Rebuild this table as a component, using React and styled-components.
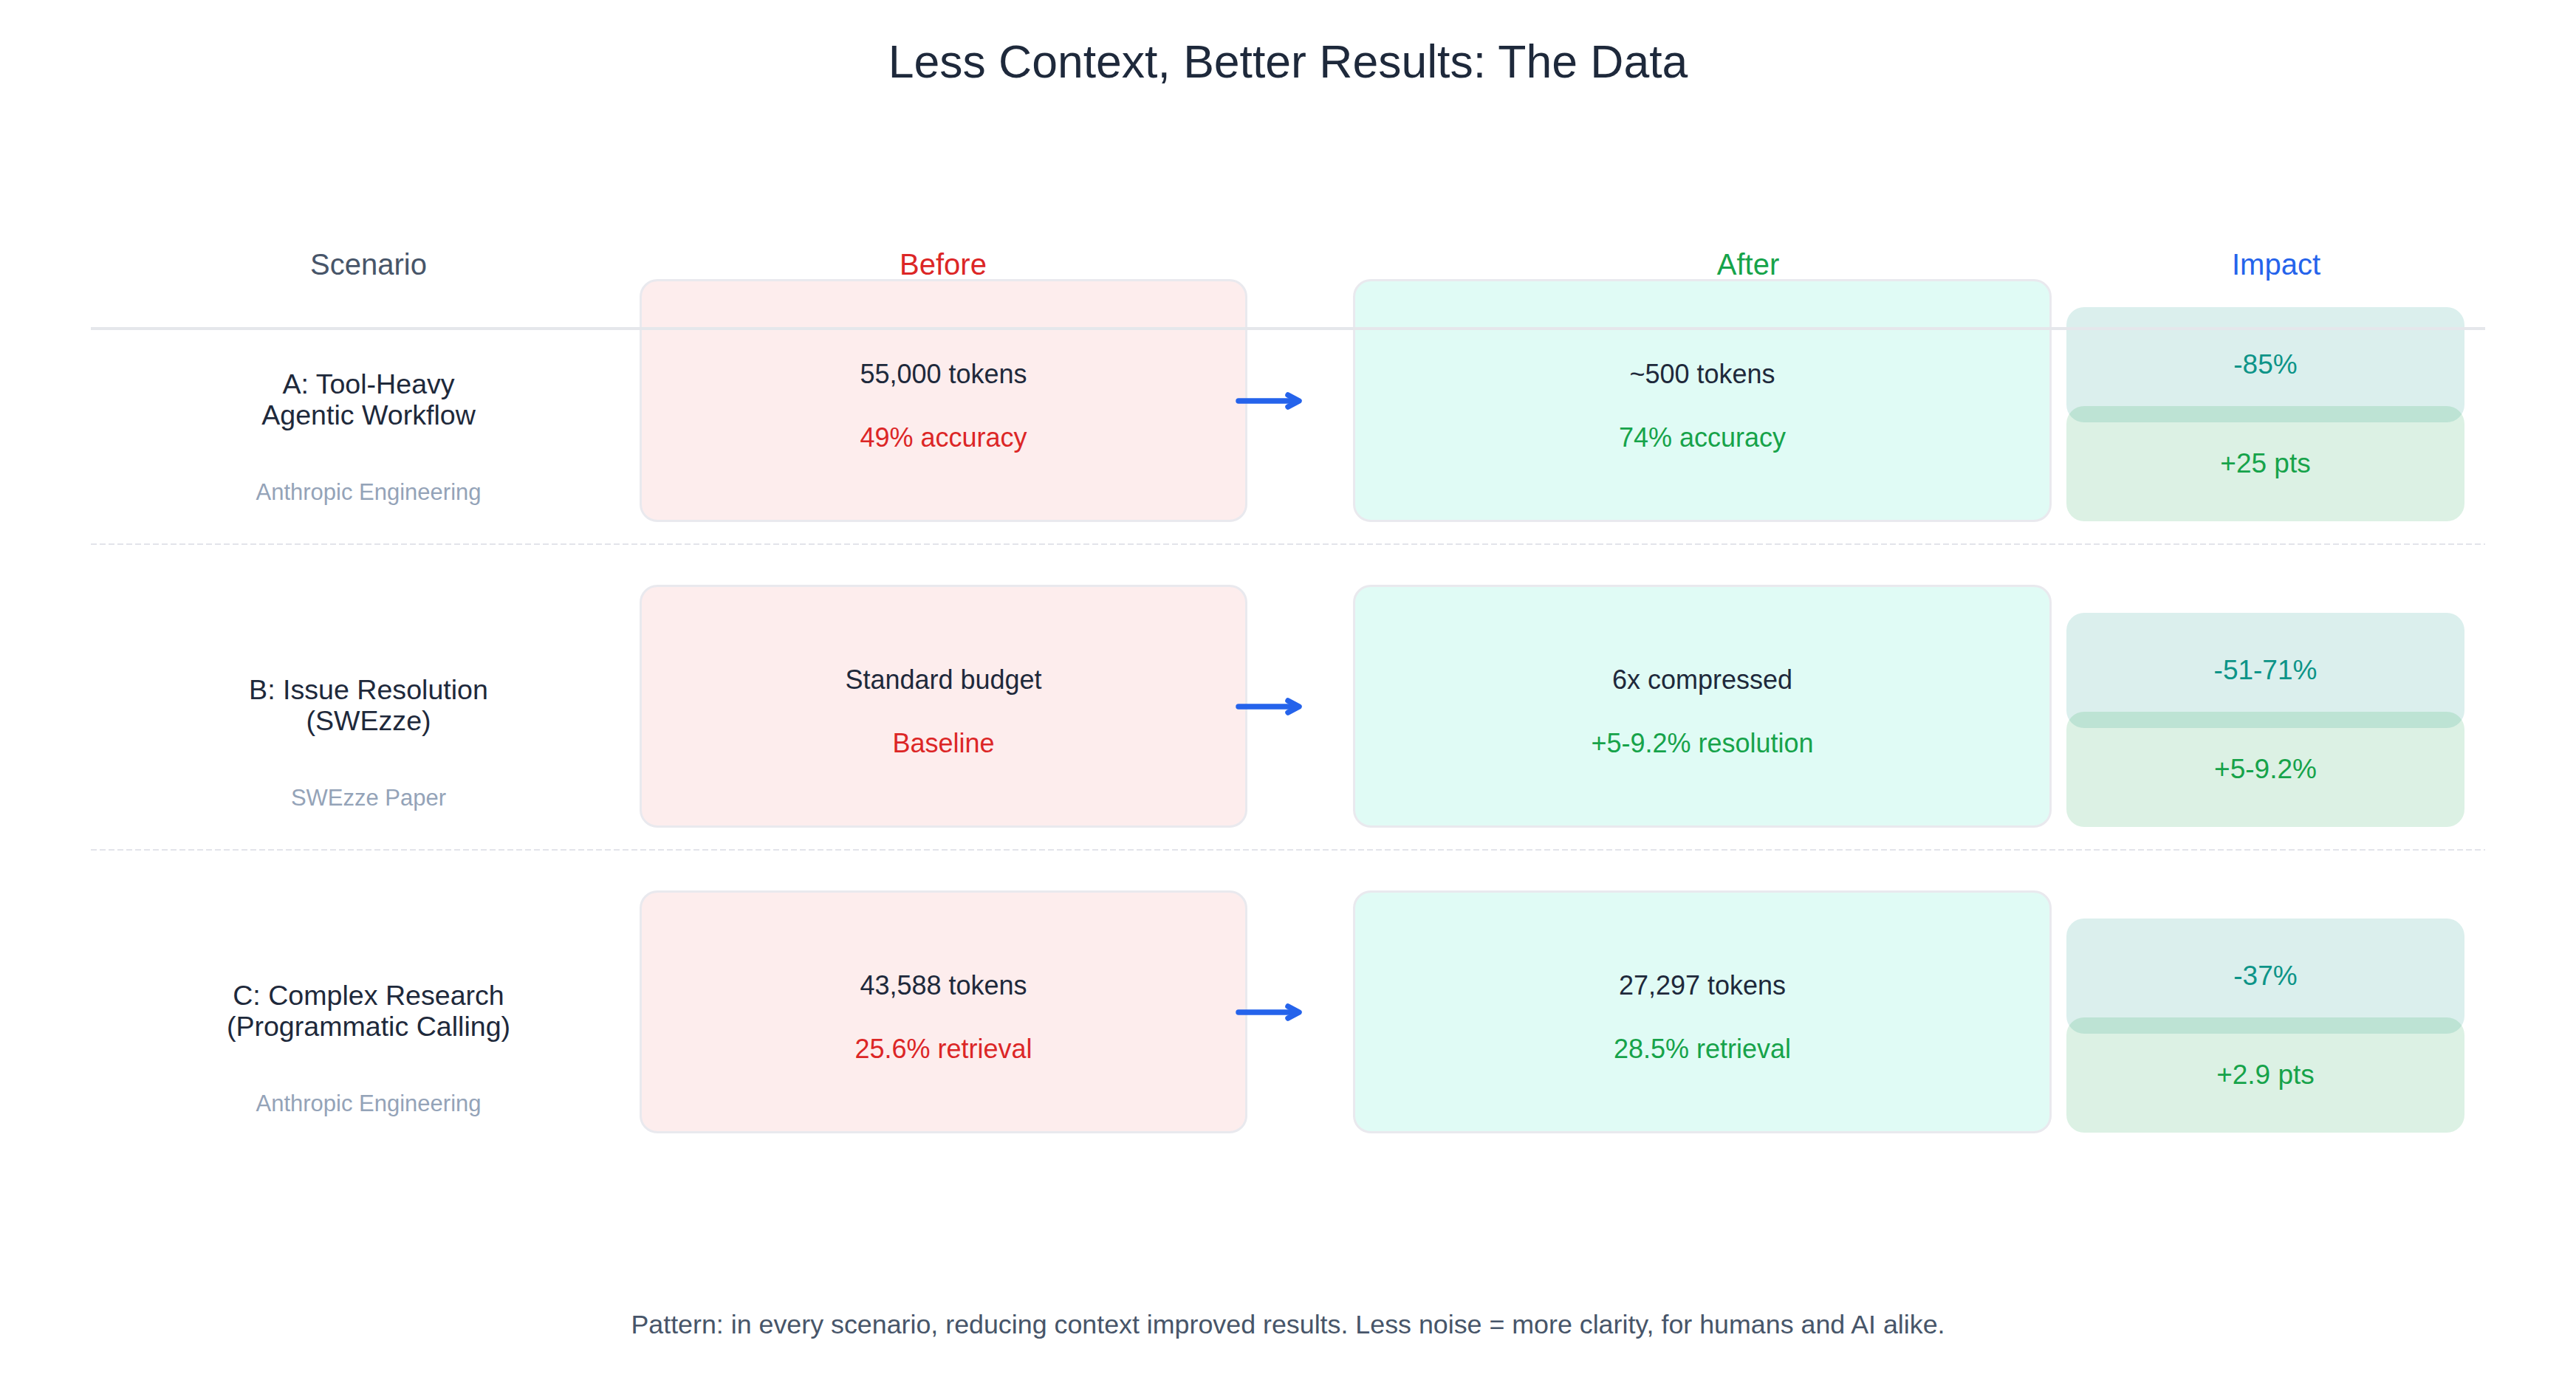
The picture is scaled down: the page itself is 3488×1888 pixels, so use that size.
import React from "react";
import styled, { createGlobalStyle } from "styled-components";

const GlobalStyle = createGlobalStyle`
  html, body {
    margin: 0;
    padding: 0;
    background: #ffffff;
  }
  body {
    font-family: "Liberation Sans", Arial, sans-serif;
    color: #1e293b;
  }
`;

const Page = styled.div`
  width: 3488px;
  height: 1888px;
  display: flex;
  flex-direction: column;
  align-items: center;
  box-sizing: border-box;
  padding-top: 52px;
`;

const Title = styled.h1`
  margin: 0;
  font-size: 62.5px;
  line-height: 62px;
  font-weight: 400;
  color: #1e293b;
`;

const Table = styled.div`
  position: relative;
  width: 3242px;
  margin-top: 224px;
`;

const HeaderRow = styled.div`
  display: grid;
  grid-template-columns: 752px 804px 238px 900px 530px;
  height: 40px;
`;

const HeaderCell = styled.div`
  grid-column: ${(p) => p.$col};
  text-align: center;
  font-size: 40px;
  line-height: 40px;
  color: ${(p) => p.$color};
`;

const HeadRule = styled.div`
  position: absolute;
  left: 0;
  right: 0;
  top: 105px;
  height: 4px;
  background: #e5e7eb;
  z-index: 2;
`;

const Row = styled.div`
  display: grid;
  grid-template-columns: 743px 823px 143px 946px 559px;
  height: 329px;
`;

const ScenarioCell = styled.div`
  display: flex;
  flex-direction: column;
  align-items: center;
  padding: 121px 0 0 9px;
`;

const ScenarioName = styled.div`
  font-size: 37.6px;
  line-height: 42px;
  text-align: center;
  color: #1e293b;
`;

const Source = styled.div`
  margin-top: 68px;
  font-size: 31px;
  line-height: 31px;
  color: #94a3b8;
`;

const ValueBox = styled.div`
  box-sizing: border-box;
  height: 329px;
  border: 3px solid #e9e9ee;
  border-radius: 24px;
  background: ${(p) => (p.$tone === "after" ? "#e0fbf5" : "#fdeded")};
  display: flex;
  flex-direction: column;
  align-items: center;
  justify-content: center;
  gap: 50px;
  padding-top: 15px;
`;

const Value = styled.div`
  font-size: 36px;
  line-height: 36px;
  color: ${(p) => p.$color || "#1e293b"};
`;

const ArrowCell = styled.div`
  display: flex;
  align-items: center;
  margin-left: -20px;
  position: relative;
  z-index: 1;
`;

const ImpactCell = styled.div`
  display: flex;
  flex-direction: column;
  padding-top: 38px;
  margin-left: 20px;
`;

const ImpactBox = styled.div`
  height: 156px;
  border-radius: 24px;
  display: flex;
  align-items: center;
  justify-content: center;
  font-size: 37px;
  background: ${(p) =>
    p.$kind === "cut" ? "rgba(13, 148, 136, 0.15)" : "rgba(22, 163, 74, 0.15)"};
  color: ${(p) => (p.$kind === "cut" ? "#0d9488" : "#16a34a")};
  & + & {
    margin-top: -22px;
  }
`;

const Divider = styled.div`
  height: 2px;
  margin: 29px 0 54px;
  background: repeating-linear-gradient(
    to right,
    #e2e4ea 0 8px,
    transparent 8px 12px
  );
`;

const Footer = styled.p`
  margin: 242px 0 0;
  font-size: 35.8px;
  line-height: 35px;
  color: #475569;
`;

function Arrow() {
  return (
    <svg width="100" height="40" viewBox="0 0 100 40">
      <g
        stroke="#2563eb"
        strokeWidth="7.5"
        strokeLinecap="round"
        strokeLinejoin="round"
        fill="none"
      >
        <line x1="8" y1="20" x2="86" y2="20" />
        <polyline points="75,12 90,20 75,28" />
      </g>
    </svg>
  );
}

const rows = [
  {
    name: ["A: Tool-Heavy", "Agentic Workflow"],
    source: "Anthropic Engineering",
    before: ["55,000 tokens", "49% accuracy"],
    after: ["~500 tokens", "74% accuracy"],
    impact: ["-85%", "+25 pts"],
  },
  {
    name: ["B: Issue Resolution", "(SWEzze)"],
    source: "SWEzze Paper",
    before: ["Standard budget", "Baseline"],
    after: ["6x compressed", "+5-9.2% resolution"],
    impact: ["-51-71%", "+5-9.2%"],
  },
  {
    name: ["C: Complex Research", "(Programmatic Calling)"],
    source: "Anthropic Engineering",
    before: ["43,588 tokens", "25.6% retrieval"],
    after: ["27,297 tokens", "28.5% retrieval"],
    impact: ["-37%", "+2.9 pts"],
  },
];

function ScenarioRow({ row }) {
  return (
    <Row>
      <ScenarioCell>
        <ScenarioName>
          {row.name[0]}
          <br />
          {row.name[1]}
        </ScenarioName>
        <Source>{row.source}</Source>
      </ScenarioCell>
      <ValueBox $tone="before">
        <Value>{row.before[0]}</Value>
        <Value $color="#dc2626">{row.before[1]}</Value>
      </ValueBox>
      <ArrowCell>
        <Arrow />
      </ArrowCell>
      <ValueBox $tone="after">
        <Value>{row.after[0]}</Value>
        <Value $color="#16a34a">{row.after[1]}</Value>
      </ValueBox>
      <ImpactCell>
        <ImpactBox $kind="cut">{row.impact[0]}</ImpactBox>
        <ImpactBox $kind="gain">{row.impact[1]}</ImpactBox>
      </ImpactCell>
    </Row>
  );
}

export default function App() {
  return (
    <>
      <GlobalStyle />
      <Page>
        <Title>Less Context, Better Results: The Data</Title>
        <Table>
          <HeaderRow>
            <HeaderCell $col={1} $color="#475569">Scenario</HeaderCell>
            <HeaderCell $col={2} $color="#dc2626">Before</HeaderCell>
            <HeaderCell $col={4} $color="#16a34a">After</HeaderCell>
            <HeaderCell $col={5} $color="#2563eb">Impact</HeaderCell>
          </HeaderRow>
          <HeadRule />
          {rows.map((row, i) => (
            <React.Fragment key={row.source + i}>
              {i > 0 && <Divider />}
              <ScenarioRow row={row} />
            </React.Fragment>
          ))}
        </Table>
        <Footer>
          Pattern: in every scenario, reducing context improved results. Less
          noise = more clarity, for humans and AI alike.
        </Footer>
      </Page>
    </>
  );
}
